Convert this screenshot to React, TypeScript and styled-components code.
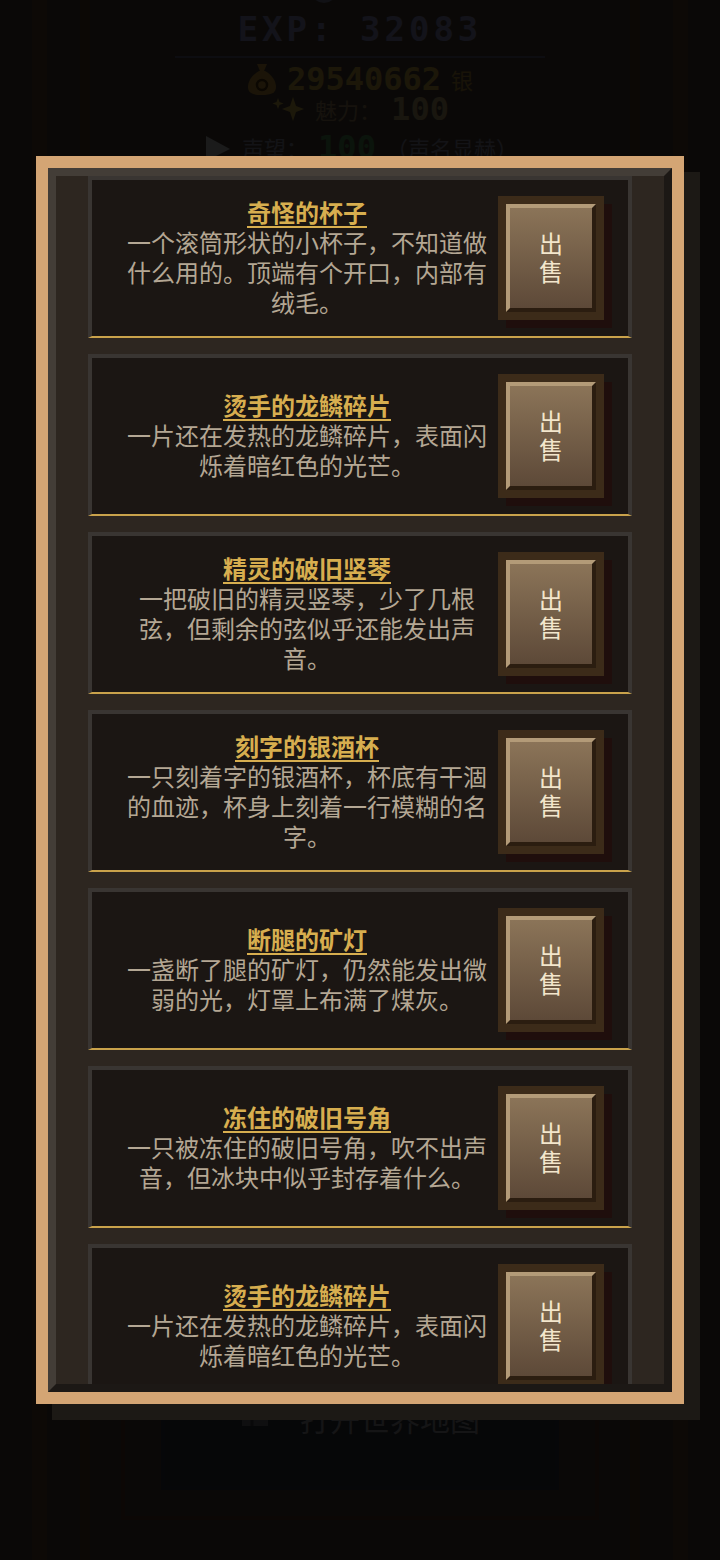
import styled, { createGlobalStyle } from "styled-components";

const GlobalStyle = createGlobalStyle`
  html, body {
    margin: 0;
    padding: 0;
    background: #0a0908;
  }
  body {
    font-family: "Noto Sans CJK SC", "Noto Sans", sans-serif;
  }
  * {
    box-sizing: border-box;
  }
`;

/* ---------- page behind the dialog ---------- */

const Page = styled.div`
  height: 1560px;
  overflow: hidden;
  background: #52463d;
  display: flex;
  justify-content: center;
`;

const Shell = styled.div`
  width: 656px;
  height: 100%;
  border-left: 15px solid #6a4836;
  border-right: 15px solid #6a4836;
  padding: 0 33px;
  display: flex;
  flex-direction: column;
`;

const Inner = styled.div`
  flex: 1;
  border-left: 10px solid #60402e;
  border-right: 10px solid #60402e;
  display: flex;
  flex-direction: column;
  align-items: center;
`;

const Status = styled.section`
  margin-top: -30px;
  width: 100%;
  display: flex;
  flex-direction: column;
  align-items: center;
`;

const LevelRow = styled.div`
  display: flex;
  align-items: center;
  gap: 36px;
  height: 40px;
  font-family: "DejaVu Sans Mono", monospace;
  font-weight: 700;
  font-size: 30px;
  line-height: 40px;
  color: #b9b9dc;
`;

const Exp = styled.div`
  font-family: "DejaVu Sans Mono", monospace;
  font-weight: 700;
  font-size: 34px;
  line-height: 38px;
  letter-spacing: 4px;
  color: #9d9dd0;
`;

const Divider = styled.hr`
  width: 370px;
  margin: 8px 0 6px;
  border: none;
  border-top: 2px solid #6b6b8f;
`;

const StatRow = styled.div<{ $h: number }>`
  height: ${(p) => p.$h}px;
  display: flex;
  align-items: center;
  gap: 10px;
`;

const BigNum = styled.span<{ $color: string }>`
  font-family: "DejaVu Sans Mono", monospace;
  font-weight: 700;
  font-size: 32px;
  line-height: 28px;
  color: ${(p) => p.$color};
`;

const Label = styled.span<{ $color: string }>`
  font-size: 22px;
  line-height: 26px;
  color: ${(p) => p.$color};
`;

const Middle = styled.div`
  flex: 1;
`;

const Actions = styled.div`
  width: 478px;
  border: 4px solid #633f2d;
  padding: 0 36px 26px;
  margin-bottom: 40px;
`;

const MapButton = styled.button`
  width: 100%;
  height: 100px;
  border: 4px solid #363a4c;
  background: #363940;
  display: flex;
  align-items: flex-start;
  justify-content: center;
  gap: 30px;
  padding-top: 4px;
  font-family: inherit;
  font-size: 30px;
  line-height: 40px;
  color: #a8a8b0;
`;

/* ---------- dialog ---------- */

const Overlay = styled.div`
  position: fixed;
  inset: 0;
  background: rgba(0, 0, 0, 0.88);
  display: flex;
  align-items: center;
  justify-content: center;
`;

const Modal = styled.div`
  width: 648px;
  height: 1248px;
  border: 12px solid #d4a574;
  background: #1c1815;
  box-shadow: 16px 16px 0 #1c1915;
`;

const List = styled.div`
  height: 100%;
  border: 8px solid;
  border-color: #433d37 #1c1815 #1c1815 #433d37;
  background: #2d2620;
  padding: 0 32px 24px;
  overflow-y: auto;
  scrollbar-width: none;
  display: flex;
  flex-direction: column;
  gap: 16px;
`;

const Card = styled.div`
  flex-shrink: 0;
  height: 162px;
  border: 4px solid #393532;
  border-bottom: 2px solid #c9a24b;
  background: #1b1613;
  padding: 0 24px 0 32px;
  display: flex;
  align-items: center;
  gap: 8px;
`;

const Info = styled.div`
  flex: 1;
  text-align: center;
  margin-top: -2px;
`;

const Title = styled.h3`
  margin: 0;
  font-size: 24px;
  line-height: 30px;
  font-weight: 700;
  color: #d7ae4f;
  text-decoration: underline;
  text-decoration-thickness: 2px;
  text-underline-offset: 4px;
`;

const Desc = styled.p`
  margin: 0;
  font-size: 24px;
  line-height: 30px;
  color: #b4a794;
`;

const SellFrame = styled.div`
  flex-shrink: 0;
  padding: 8px;
  background: #3c2b19;
  box-shadow: 8px 8px 0 #1f0e0c;
`;

const SellButton = styled.button`
  width: 90px;
  height: 108px;
  padding: 0 29px 3px;
  border: 4px solid;
  border-color: #b39b78 #2b1d10 #2b1d10 #b39b78;
  background: linear-gradient(180deg, #8b7458 0%, #5d4938 100%);
  color: #f3e6cc;
  font-family: inherit;
  font-size: 24px;
  line-height: 28px;
  text-align: center;
  cursor: pointer;
`;

const items = [
  {
    name: "奇怪的杯子",
    desc: "一个滚筒形状的小杯子，不知道做什么用的。顶端有个开口，内部有绒毛。",
  },
  {
    name: "烫手的龙鳞碎片",
    desc: "一片还在发热的龙鳞碎片，表面闪烁着暗红色的光芒。",
  },
  {
    name: "精灵的破旧竖琴",
    desc: "一把破旧的精灵竖琴，少了几根弦，但剩余的弦似乎还能发出声音。",
  },
  {
    name: "刻字的银酒杯",
    desc: "一只刻着字的银酒杯，杯底有干涸的血迹，杯身上刻着一行模糊的名字。",
  },
  {
    name: "断腿的矿灯",
    desc: "一盏断了腿的矿灯，仍然能发出微弱的光，灯罩上布满了煤灰。",
  },
  {
    name: "冻住的破旧号角",
    desc: "一只被冻住的破旧号角，吹不出声音，但冰块中似乎封存着什么。",
  },
  {
    name: "烫手的龙鳞碎片",
    desc: "一片还在发热的龙鳞碎片，表面闪烁着暗红色的光芒。",
  },
];

function BagIcon() {
  return (
    <svg width="30" height="34" viewBox="0 0 30 34">
      <path d="M10 2h10l-3 7h-4z" fill="#d9a441" />
      <path
        d="M12 9h6c7 4 11 10 11 16 0 6-5 8-14 8S1 31 1 25C1 19 5 13 12 9z"
        fill="#d9a441"
      />
      <circle cx="15" cy="23" r="5" fill="none" stroke="#5a3a10" strokeWidth="2.5" />
    </svg>
  );
}

function SparkleIcon() {
  return (
    <svg width="34" height="30" viewBox="0 0 34 30">
      <path d="M22 3l3 9 8 3-8 3-3 9-3-9-8-3 8-3z" fill="#e6c252" />
      <path d="M7 4l1.5 4 4 1.5-4 1.5L7 15l-1.5-4-4-1.5 4-1.5z" fill="#e6c252" />
    </svg>
  );
}

function PlayIcon() {
  return (
    <svg width="30" height="30" viewBox="0 0 30 30">
      <path d="M4 4l24 13-24 12z" fill="#d8d8d8" />
    </svg>
  );
}

function MapIcon() {
  return (
    <svg width="30" height="30" viewBox="0 0 30 30">
      <rect x="2" y="6" width="26" height="22" fill="#7a7a80" />
      <path d="M2 14h26M12 6v22" stroke="#4a4a50" strokeWidth="3" />
    </svg>
  );
}

export default function App() {
  return (
    <>
      <GlobalStyle />
      <Page>
        <Shell>
          <Inner>
            <Status>
              <LevelRow>
                <svg width="32" height="32" viewBox="0 0 32 32">
                  <circle cx="16" cy="16" r="13" fill="#8a8aa8" />
                </svg>
                <span>55</span>
              </LevelRow>
              <Exp>EXP: 32083</Exp>
              <Divider />
              <StatRow $h={30}>
                <BagIcon />
                <BigNum $color="#e0bc4c">29540662</BigNum>
                <Label $color="#c09a40">银</Label>
              </StatRow>
              <StatRow $h={30}>
                <SparkleIcon />
                <Label $color="#b0946a">魅力：</Label>
                <BigNum $color="#c8b278">100</BigNum>
              </StatRow>
              <StatRow $h={46}>
                <PlayIcon />
                <Label $color="#9c9cb4">声望：</Label>
                <BigNum $color="#5fa560">100</BigNum>
                <Label $color="#9c9cb4">（声名显赫）</Label>
              </StatRow>
            </Status>
            <Middle />
            <Actions>
              <MapButton>
                <MapIcon />
                打开世界地图
              </MapButton>
            </Actions>
          </Inner>
        </Shell>
      </Page>

      <Overlay>
        <Modal>
          <List>
            {items.map((item, i) => (
              <Card key={i}>
                <Info>
                  <Title>{item.name}</Title>
                  <Desc>{item.desc}</Desc>
                </Info>
                <SellFrame>
                  <SellButton>出售</SellButton>
                </SellFrame>
              </Card>
            ))}
          </List>
        </Modal>
      </Overlay>
    </>
  );
}
